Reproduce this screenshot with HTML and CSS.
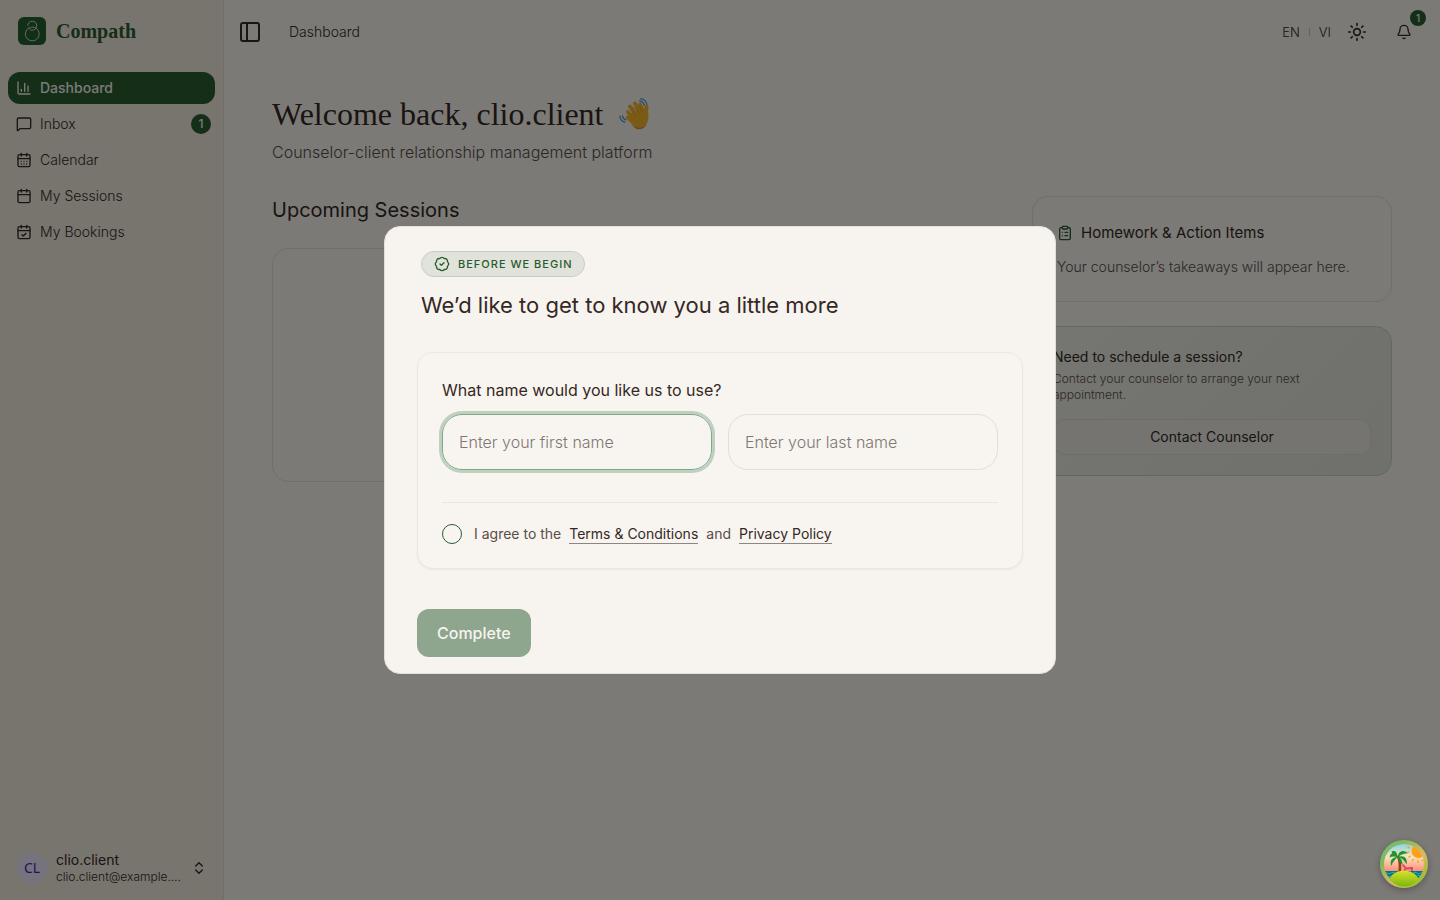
FILE: index.html
```html
<!DOCTYPE html>
<html lang="en">
<head>
    <meta charset="UTF-8">
    <meta name="viewport" content="width=device-width, initial-scale=1.0">
    <title>Compath</title>
    <link rel="stylesheet" href="styles.css">
</head>
<body>
    <div class="app">
        <aside class="sidebar">
            <a class="brand" href="#">
                <svg class="brand-logo" viewBox="0 0 28 28" aria-hidden="true">
                    <rect width="28" height="28" rx="6" fill="#246030"/>
                    <g fill="none" stroke="#c4d6c2" stroke-width="1" stroke-linecap="round">
                        <path d="M11.5 10.500a7 7 0 1 0 6 .2"/>
                        <path d="M9.700 8.600a4.500 4.500 0 1 1 4.500 4.600c-2.200.1-3.400-1.600-1.700-2.500 1.600-.8 3.700-.7 5 0"/>
                    </g>
                </svg>
                <span class="brand-name">Compath</span>
            </a>
            <nav class="side-nav">
                <a class="nav-item active" href="#">
                    <svg class="icon" viewBox="0 0 24 24"><path d="M3 3v16a2 2 0 0 0 2 2h16"/><path d="M18 17V9"/><path d="M13 17V5"/><path d="M8 17v-3"/></svg>
                    <span>Dashboard</span>
                </a>
                <a class="nav-item" href="#">
                    <svg class="icon" viewBox="0 0 24 24"><path d="M22 17a2 2 0 0 1-2 2H6.800a2 2 0 0 0-1.400.6l-2.200 2.200A.7.7 0 0 1 2 21.300V5a2 2 0 0 1 2-2h16a2 2 0 0 1 2 2z"/></svg>
                    <span>Inbox</span>
                    <span class="count">1</span>
                </a>
                <a class="nav-item" href="#">
                    <svg class="icon" viewBox="0 0 24 24"><path d="M8 2v4M16 2v4"/><rect x="3" y="4" width="18" height="18" rx="2"/><path d="M3 10h18M8 14h.01M12 14h.01M16 14h.01M8 18h.01M12 18h.01M16 18h.01"/></svg>
                    <span>Calendar</span>
                </a>
                <a class="nav-item" href="#">
                    <svg class="icon" viewBox="0 0 24 24"><path d="M8 2v4M16 2v4"/><rect x="3" y="4" width="18" height="18" rx="2"/><path d="M3 10h18"/></svg>
                    <span>My Sessions</span>
                </a>
                <a class="nav-item" href="#">
                    <svg class="icon" viewBox="0 0 24 24"><path d="M8 2v4M16 2v4"/><rect x="3" y="4" width="18" height="18" rx="2"/><path d="M3 10h18M9 16l2 2 4-4"/></svg>
                    <span>My Bookings</span>
                </a>
            </nav>
            <button class="account" type="button">
                <span class="avatar">CL</span>
                <span class="account-text">
                    <span class="account-name">clio.client</span>
                    <span class="account-mail">clio.client@example.com</span>
                </span>
                <svg class="icon" viewBox="0 0 24 24"><path d="m7 15 5 5 5-5M7 9l5-5 5 5"/></svg>
            </button>
        </aside>

        <div class="page">
            <header class="topbar">
                <button class="icon-btn" type="button" aria-label="Toggle sidebar">
                    <svg class="icon icon-lg" viewBox="0 0 24 24"><rect x="3" y="3" width="18" height="18" rx="2"/><path d="M9 3v18"/></svg>
                </button>
                <span class="crumb">Dashboard</span>
                <div class="topbar-tools">
                    <button class="lang" type="button">EN</button>
                    <span class="lang-sep"></span>
                    <button class="lang" type="button">VI</button>
                    <button class="icon-btn theme" type="button" aria-label="Theme">
                        <svg class="icon icon-md" viewBox="0 0 24 24"><circle cx="12" cy="12" r="4"/><path d="M12 2v2M12 20v2M4.930 4.930l1.410 1.410M17.660 17.660l1.410 1.410M2 12h2M20 12h2M6.340 17.660l-1.410 1.410M19.070 4.930l-1.410 1.410"/></svg>
                    </button>
                    <button class="icon-btn bell" type="button" aria-label="Notifications">
                        <svg class="icon" viewBox="0 0 24 24"><path d="M10.300 21a2 2 0 0 0 3.400 0"/><path d="M3.260 15.330A1 1 0 0 0 4 17h16a1 1 0 0 0 .74-1.670C19.410 13.960 18 12.500 18 8A6 6 0 0 0 6 8c0 4.500-1.410 5.960-2.740 7.330"/></svg>
                        <span class="bell-count">1</span>
                    </button>
                </div>
            </header>

            <main class="content">
                <div class="greeting">
                    <h1>Welcome back, clio.client
                        <svg class="wave" viewBox="0 0 32 32" aria-hidden="true">
                            <g fill="none" stroke="#4c9bd2" stroke-width="1.300" stroke-linecap="round">
                                <path d="M21.500 2.800c2.400.3 4.300 2 4.700 4.500M22.500.8c3.500.3 6 2.500 6.300 6M2 18c0 3 1.800 5.300 4.700 6M4.500 17.800c.3 1.900 1.400 3.300 3.300 4"/>
                            </g>
                            <g fill="none" stroke="#f6b52d" stroke-width="4" stroke-linecap="round">
                                <path d="M10 14l8 9M12 8.500l9 11M17 5.500l7 11M22 6.500l4 9M27.500 17l1-8"/>
                            </g>
                            <path d="M10.500 16.500 23 11l7 1.500c.8 5 .8 10-1.500 13.500-3 4.500-9.500 4.500-13 1.500L8.500 21c-2-2.200.4-4.800 2.800-2.800z" fill="#f6b52d"/>
                            <path d="M13 26c5 5 12.500 4.500 15.500 0-1 3.500-4.500 5.500-8 5.200-3-.2-5.500-2.700-7.500-5.200z" fill="#e08a1e"/>
                            <path d="M13 12l5 6M16.500 9l5 7M21.500 8.500l3.500 6" stroke="#d98c1b" stroke-width=".7" fill="none"/>
                        </svg>
                    </h1>
                    <p>Counselor-client relationship management platform</p>
                </div>
                <div class="columns">
                    <section class="sessions">
                        <h2>Upcoming Sessions</h2>
                        <div class="card sessions-card"></div>
                    </section>
                    <div class="side">
                        <section class="card homework">
                            <h3>
                                <svg class="icon" viewBox="0 0 24 24"><rect x="8" y="2" width="8" height="4" rx="1"/><path d="M16 4h2a2 2 0 0 1 2 2v14a2 2 0 0 1-2 2H6a2 2 0 0 1-2-2V6a2 2 0 0 1 2-2h2M12 11h4M12 16h4M8 11h.01M8 16h.01"/></svg>
                                Homework &amp; Action Items
                            </h3>
                            <p>Your counselor’s takeaways will appear here.</p>
                        </section>
                        <section class="card schedule">
                            <h3>Need to schedule a session?</h3>
                            <p>Contact your counselor to arrange your next appointment.</p>
                            <button class="contact" type="button">Contact Counselor</button>
                        </section>
                    </div>
                </div>
            </main>
        </div>
    </div>

    <div class="overlay">
        <form class="dialog" role="dialog" aria-modal="true" aria-labelledby="dialogTitle">
            <header class="dialog-head">
                <span class="pill">
                    <svg class="icon" viewBox="0 0 24 24"><path d="M3.850 8.620a4 4 0 0 1 4.780-4.770 4 4 0 0 1 6.740 0 4 4 0 0 1 4.780 4.780 4 4 0 0 1 0 6.740 4 4 0 0 1-4.770 4.780 4 4 0 0 1-6.750 0 4 4 0 0 1-4.780-4.770 4 4 0 0 1 0-6.760Z"/><path d="m9 12 2 2 4-4"/></svg>
                    BEFORE WE BEGIN
                </span>
                <h2 id="dialogTitle">We’d like to get to know you a little more</h2>
            </header>
            <div class="panel">
                <label class="question" for="firstName">What name would you like us to use?</label>
                <div class="names">
                    <input class="field focused" id="firstName" type="text" placeholder="Enter your first name">
                    <input class="field" id="lastName" type="text" placeholder="Enter your last name" aria-label="Last name">
                </div>
                <div class="agree">
                    <input class="tick" id="agree" type="checkbox">
                    <label for="agree">I agree to the</label>
                    <a href="#">Terms &amp; Conditions</a>
                    <span>and</span>
                    <a href="#">Privacy Policy</a>
                </div>
            </div>
            <button class="complete" type="submit" disabled>Complete</button>
        </form>
    </div>

    <button class="fab" type="button" aria-label="Open devtools">
        <svg viewBox="0 0 48 48" aria-hidden="true">
            <defs>
                <linearGradient id="ring" x1="0" y1="0" x2="1" y2="1">
                    <stop offset="0" stop-color="#6fbf9a"/>
                    <stop offset=".25" stop-color="#7fb95a"/>
                    <stop offset=".6" stop-color="#d9b964"/>
                    <stop offset="1" stop-color="#80c010"/>
                </linearGradient>
                <linearGradient id="sky" x1="0" y1="0" x2="0" y2="1">
                    <stop offset=".05" stop-color="#79d5e8"/>
                    <stop offset=".35" stop-color="#f6e4be"/>
                    <stop offset=".65" stop-color="#ff8f78"/>
                </linearGradient>
                <linearGradient id="sand" x1="0" y1="0" x2="0" y2="1">
                    <stop offset="0" stop-color="#dbe22b"/>
                    <stop offset="1" stop-color="#78b60c"/>
                </linearGradient>
                <clipPath id="disc"><circle cx="24" cy="24" r="20"/></clipPath>
            </defs>
            <circle cx="24" cy="24" r="24" fill="url(#ring)"/>
            <g clip-path="url(#disc)">
                <path d="M0 0h48v48H0z" fill="url(#sky)"/>
                <circle cx="38.500" cy="11" r="7" fill="#ff9f16"/>
                <path d="M29.500 8l-2-1M29 12l-2.500.5M30.500 16l-2 1.500M33.500 19l-1.200 2.300M38 20.500v2.500M42 19.500l1 2" stroke="#ff9f16" stroke-width="1.400"/>
                <path d="M0 31h48v10H0z" fill="#08737f"/>
                <path d="M3 33q2-1.500 4 0t4 0 4 0M33 33q2-1.500 4 0t4 0 4 0M3 36q2-1.500 4 0t4 0M37 36q2-1.500 4 0t4 0" fill="none" stroke="#29b2bd" stroke-width="1"/>
                <path d="M18 16c2.500 6 2.500 10 1.500 17" fill="none" stroke="#914213" stroke-width="2.600"/>
                <path d="M18 17.500c-2-6-8-5-8.500 0 3-1.500 5-1.500 8.500 0zM18 17c-5 0-9 3-6.500 9 1-4 3-6 6.500-9zM18 17c0-6 6-8 9.500-3.500-3-.5-6.500 1-9.500 3.500zM18 17c6-2.500 10 1.500 8.500 7.500-2-4-4-6-8.500-7.500zM18 17c-2-6-2.500-6.500-6.500-5.500.5 2 3 5 6.500 5.500zM18 17c.5 4 2 6 4.500 7.500 0-3.500-1-6-4.500-7.500z" fill="#20942d"/>
                <path d="M22.500 24.500l3.500 4 7-.5M25 29l-1 3M32 28v3" fill="none" stroke="#df3f69" stroke-width="1.800"/>
            </g>
            <path d="M9.500 39c2-5 8-8.500 14.500-8.500S36.500 34 38.500 39c-3 4-8 7.500-14.500 7.500S12.500 43 9.500 39z" fill="url(#sand)"/>
        </svg>
    </button>
</body>
</html>
```

FILE: styles.css
```css
:root {
  --bg: #f7f4ef;
  --side: #f0e8dd;
  --ink: #352824;
  --muted: #5a4d48;
  --line: #e2ded8;
  --green: #285c30;
  font-family: Inter, "Liberation Sans", sans-serif;
  font-size: 14px;
  line-height: 20px;
}
* {
  box-sizing: border-box;
}
body {
  margin: 0;
  background: var(--bg);
  color: var(--ink);
}
h1, h2, h3, p {
  margin: 0;
  font-weight: 400;
}
a {
  color: inherit;
  text-decoration: none;
}
button, input {
  font: inherit;
  color: inherit;
}
button {
  padding: 0;
  border: 0;
  background: none;
}
.icon {
  flex: none;
  width: 16px;
  height: 16px;
  fill: none;
  stroke: currentColor;
  stroke-width: 2;
  stroke-linecap: round;
  stroke-linejoin: round;
}
.icon-md {
  width: 20px;
  height: 20px;
}
.icon-lg {
  width: 24px;
  height: 24px;
}
.app {
  display: flex;
  min-height: 100vh;
}

/* sidebar */
.sidebar {
  display: flex;
  flex-direction: column;
  width: 224px;
  padding: 8px;
  border-right: 1px solid var(--line);
  background: var(--side);
  font-weight: 300;
}
.brand {
  display: flex;
  align-items: center;
  gap: 10px;
  height: 46px;
  padding-left: 10px;
}
.brand-logo {
  width: 28px;
  height: 28px;
}
.brand-name {
  color: var(--green);
  font: 700 20px/28px "Liberation Serif", serif;
}
.side-nav {
  display: flex;
  flex-direction: column;
  gap: 4px;
  margin-top: 18px;
}
.nav-item {
  display: flex;
  align-items: center;
  gap: 8px;
  height: 32px;
  padding: 0 4px 0 8px;
  border-radius: 12px;
}
.nav-item.active {
  background: var(--green);
  color: var(--bg);
  font-weight: 500;
}
.count, .bell-count {
  border-radius: 50%;
  background: var(--green);
  color: var(--bg);
  font-weight: 500;
  text-align: center;
}
.count {
  width: 20px;
  margin-left: auto;
  font-size: 12px;
}
.account {
  display: flex;
  align-items: center;
  gap: 8px;
  height: 48px;
  margin-top: auto;
  padding: 0 8px;
  text-align: left;
}
.avatar {
  flex: none;
  width: 32px;
  border-radius: 50%;
  background: #ebe7f8;
  color: #5b16c0;
  font: 14px/32px "Noto Sans", sans-serif;
  text-align: center;
}
.account-text {
  display: flex;
  flex-direction: column;
  flex: 1;
  min-width: 0;
}
.account-name {
  line-height: 18px;
  font-weight: 400;
}
.account-mail {
  overflow: hidden;
  font-size: 12px;
  line-height: 16px;
  font-weight: 300;
  text-overflow: ellipsis;
  white-space: nowrap;
}

/* top bar */
.page {
  flex: 1;
  min-width: 0;
}
.topbar {
  display: flex;
  align-items: center;
  height: 64px;
  padding: 0 20px 0 14px;
  font-weight: 300;
}
.icon-btn {
  display: flex;
  position: relative;
}
.crumb {
  margin-left: 27px;
}
.topbar-tools {
  display: flex;
  align-items: center;
  margin-left: auto;
}
.lang {
  font-size: 13px;
}
.lang-sep {
  width: 1px;
  height: 8px;
  margin: 0 9px;
  background: #c9c4bd;
}
.theme {
  margin-left: 16px;
}
.bell {
  margin: 0 8px 0 29px;
}
.bell-count {
  position: absolute;
  top: -14px;
  right: -14px;
  width: 16px;
  font-size: 10px;
  line-height: 16px;
}

/* dashboard */
.content {
  padding: 32px 48px;
}
.greeting h1 {
  display: flex;
  align-items: center;
  gap: 14px;
  font: 32px/36px "Liberation Serif", serif;
}
.wave {
  width: 32px;
  height: 32px;
}
.greeting p {
  margin: 8px 0 32px;
  color: var(--muted);
  font-size: 16px;
  line-height: 24px;
  font-weight: 300;
}
.columns {
  display: grid;
  grid-template-columns: 1fr 360px;
  gap: 32px;
}
.sessions h2 {
  margin-bottom: 24px;
  font-size: 20px;
  line-height: 28px;
}
.card {
  border: 1px solid var(--line);
  border-radius: 16px;
}
.sessions-card {
  height: 234px;
}
.side {
  display: flex;
  flex-direction: column;
  gap: 24px;
}
.homework {
  padding: 24px;
}
.homework h3 {
  display: flex;
  align-items: center;
  gap: 8px;
  margin-bottom: 12px;
  font-size: 15px;
  line-height: 24px;
}
.homework .icon {
  color: var(--green);
}
.homework p, .schedule p {
  color: var(--muted);
  font-weight: 300;
}
.schedule {
  padding: 20px;
  border-color: #c6cfc2;
  background: linear-gradient(135deg, #ecebe4, #dfe2d9);
}
.schedule h3 {
  font-size: 14px;
}
.schedule p {
  max-width: 280px;
  margin: 4px 0 16px;
  font-size: 12px;
  line-height: 16px;
}
.contact {
  width: 100%;
  height: 36px;
  border: 1px solid #d9d8d0;
  border-radius: 12px;
  background: #eae8e1;
}

/* onboarding dialog */
.overlay {
  position: fixed;
  inset: 0;
  display: flex;
  align-items: center;
  justify-content: center;
  background: rgba(0, 0, 0, 0.5);
}
.dialog {
  width: 672px;
  padding: 24px 32px 16px;
  border: 1px solid var(--line);
  border-radius: 16px;
  background: var(--bg);
}
.dialog-head {
  padding: 0 4px;
}
.pill {
  display: inline-flex;
  align-items: center;
  gap: 8px;
  height: 26px;
  padding: 0 12px;
  border: 1px solid #c5d0c3;
  border-radius: 13px;
  background: #e1e3da;
  color: var(--green);
  font-size: 11px;
  font-weight: 500;
  letter-spacing: 1px;
}
.dialog h2 {
  margin: 12px 0 31px;
  font-size: 22px;
  line-height: 32px;
}
.panel {
  padding: 24px;
  border: 1px solid #ebe7e2;
  border-radius: 16px;
  background: #f8f5f0;
  box-shadow: 0 1px 2px rgba(0, 0, 0, 0.06);
}
.question {
  display: block;
  margin-bottom: 11px;
  font-size: 16px;
  line-height: 26px;
}
.names {
  display: grid;
  grid-template-columns: 1fr 1fr;
  gap: 16px;
}
.field {
  min-width: 0;
  height: 56px;
  padding: 0 16px;
  border: 1px solid var(--line);
  border-radius: 20px;
  background: transparent;
  outline: 0;
  font-size: 16px;
  font-weight: 300;
}
.field::placeholder {
  color: #7f7773;
  opacity: 1;
}
.field.focused {
  border-color: #7fa887;
  box-shadow: 0 0 0 3px #bfd0bf;
}
.agree {
  display: flex;
  align-items: center;
  gap: 8px;
  margin-top: 32px;
  padding-top: 21px;
  border-top: 1px solid #ebe7e2;
}
.tick {
  appearance: none;
  width: 20px;
  height: 20px;
  margin: 0 4px 0 0;
  border: 1px solid var(--green);
  border-radius: 50%;
}
.agree label, .agree span {
  color: var(--muted);
}
.agree a {
  line-height: 18px;
  border-bottom: 1px solid #8f8682;
}
.complete {
  margin-top: 40px;
  height: 48px;
  padding: 0 20px;
  border-radius: 12px;
  background: #8ea68e;
  color: var(--bg);
  font-size: 16px;
  font-weight: 500;
}
.fab {
  position: fixed;
  right: 12px;
  bottom: 12px;
  width: 48px;
  height: 48px;
  border-radius: 50%;
  box-shadow: 0 2px 6px rgba(0, 0, 0, 0.3);
}
.fab svg {
  display: block;
}
```
